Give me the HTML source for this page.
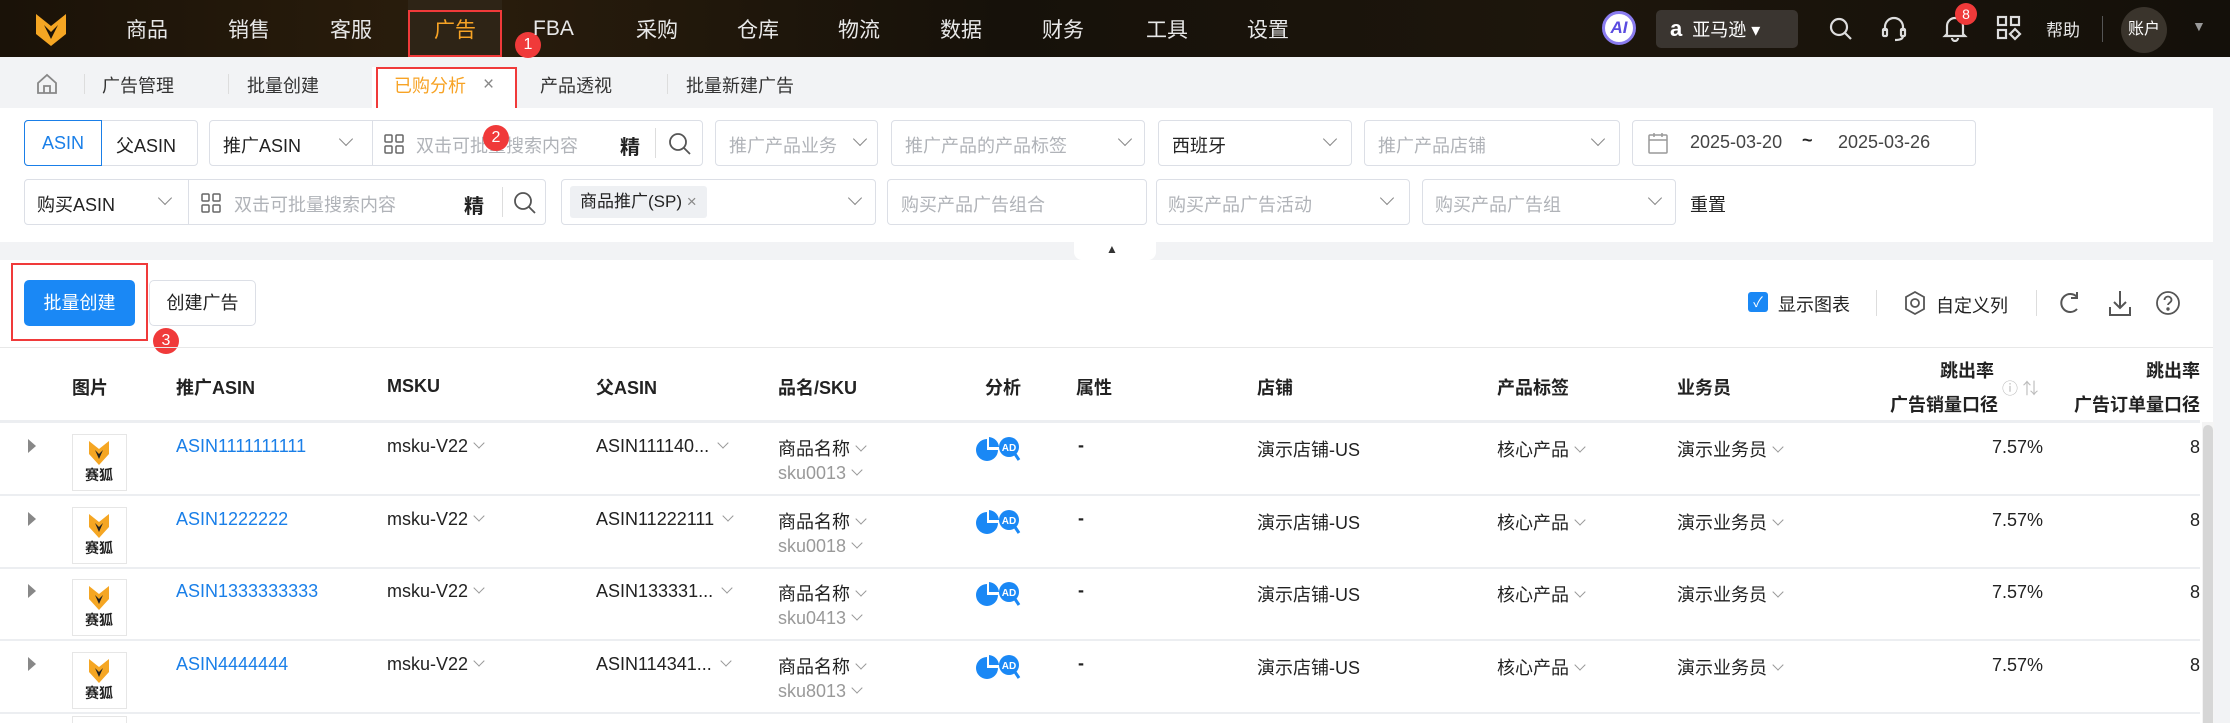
<!DOCTYPE html>
<html style="width:2230px;height:723px;overflow:hidden"><head><meta charset="utf-8"><style>
*{box-sizing:border-box;margin:0;padding:0}
body{width:2230px;height:723px;overflow:hidden;background:#f2f3f5;font-family:"Liberation Sans","Noto Sans CJK SC",sans-serif;color:#222;font-size:18px}
#wrap{position:relative;width:2230px;height:723px;overflow:hidden}
.a{position:absolute;white-space:nowrap}
.nav{left:0;top:0;width:2230px;height:57px;background:linear-gradient(90deg,#1a1208 0%,#2a1d0c 20%,#16110a 45%,#1d160c 70%,#14100a 100%)}
.box{border:1px solid #dcdfe6;border-radius:4px;background:#fff;height:46px}
.ph{color:#b0b3b8}
.chev{width:10px;height:10px;border-right:1.5px solid #888;border-bottom:1.5px solid #888;transform:rotate(45deg)}
.red{border:2px solid #f03a3a}
.rc{width:26px;height:26px;border-radius:50%;background:#f03a3a;color:#fff;font-size:16px;text-align:center;line-height:26px}
.th{font-weight:bold;font-size:18px;top:374px}
.lnk{color:#1a7fe8}
.g{color:#999}
.sm{display:inline-block;width:8px;height:8px;border-right:1.3px solid #999;border-bottom:1.3px solid #999;transform:rotate(45deg);margin-left:7px;position:relative;top:-5px}
.nm{color:#e8e8e8;font-size:21px;top:14px}
</style></head><body><div id="wrap">
<div class="a nav"></div>
<svg class="a" style="left:33px;top:12px" width="36" height="36" viewBox="0 0 36 36"><path d="M3 2 L18 14 L33 2 L33 22 L18 34 L3 22Z" fill="#f5a623"/><path d="M11 13 L18 20 L25 13 L18 27Z" fill="#1a1208"/></svg>
<div class="a nm" style="left:126px">商品</div>
<div class="a nm" style="left:228px">销售</div>
<div class="a nm" style="left:330px">客服</div>
<div class="a" style="left:408px;top:0;width:94px;height:57px;background:#2e2416"></div>
<div class="a red" style="left:408px;top:10px;width:94px;height:47px"></div>
<div class="a nm" style="left:434px;color:#f7a325">广告</div>
<div class="a rc" style="left:515px;top:32px">1</div>
<div class="a nm" style="left:533px;top:17px">FBA</div>
<div class="a nm" style="left:636px">采购</div>
<div class="a nm" style="left:737px">仓库</div>
<div class="a nm" style="left:838px">物流</div>
<div class="a nm" style="left:940px">数据</div>
<div class="a nm" style="left:1042px">财务</div>
<div class="a nm" style="left:1146px">工具</div>
<div class="a nm" style="left:1247px">设置</div>
<div class="a" style="left:1602px;top:11px;width:34px;height:34px;border-radius:50%;background:#fff;border:3px solid #8a7cf0;color:#5a4be0;font-weight:bold;font-style:italic;font-size:17px;text-align:center;line-height:28px">AI</div>
<div class="a" style="left:1656px;top:10px;width:142px;height:38px;border-radius:5px;background:#3a3530;color:#fff;font-size:18px;line-height:38px;padding-left:14px"><b style="font-size:22px">a</b>&nbsp; 亚马逊 ▾</div>
<svg class="a" style="left:1828px;top:16px" width="26" height="26" viewBox="0 0 26 26" fill="none" stroke="#ddd" stroke-width="2.2"><circle cx="11" cy="11" r="8"/><path d="M17 17l6 6"/></svg>
<svg class="a" style="left:1881px;top:15px" width="26" height="28" viewBox="0 0 26 28" fill="none" stroke="#ddd" stroke-width="2.2"><path d="M4 16V12a9 9 0 0118 0v4"/><rect x="2" y="14" width="4" height="7" rx="1"/><rect x="20" y="14" width="4" height="7" rx="1"/><path d="M22 21c0 3-4 4-8 4"/></svg>
<svg class="a" style="left:1942px;top:14px" width="26" height="28" viewBox="0 0 26 28" fill="none" stroke="#ddd" stroke-width="2.2"><path d="M5 20V12a8 8 0 0116 0v8l2 2H3z"/><path d="M10 24a3 3 0 006 0"/></svg>
<div class="a" style="left:1955px;top:3px;width:22px;height:22px;border-radius:50%;background:#f03a3a;color:#fff;font-size:14px;text-align:center;line-height:22px">8</div>
<svg class="a" style="left:1996px;top:15px" width="26" height="26" viewBox="0 0 26 26" fill="none" stroke="#ddd" stroke-width="2.2"><rect x="2" y="2" width="8" height="8"/><rect x="15" y="2" width="8" height="8"/><rect x="2" y="15" width="8" height="8"/><path d="M19 14l5 5-5 5-5-5z"/></svg>
<div class="a" style="left:2046px;top:16px;color:#e8e8e8;font-size:17px">帮助</div>
<div class="a" style="left:2102px;top:16px;width:1px;height:26px;background:#555"></div>
<div class="a" style="left:2121px;top:7px;width:46px;height:46px;border-radius:50%;background:#3a342c;color:#fff;font-size:16px;text-align:center;line-height:46px">账户</div>
<div class="a" style="left:2192px;top:18px;color:#999;font-size:14px">▼</div>

<svg class="a" style="left:35px;top:72px" width="24" height="24" viewBox="0 0 24 24" fill="none" stroke="#888" stroke-width="1.8"><path d="M3 11L12 3l9 8v10H3z"/><path d="M9 21v-7h6v7"/></svg>
<div class="a" style="left:84px;top:74px;width:1px;height:20px;background:#ddd"></div>
<div class="a" style="left:102px;top:72px;color:#333">广告管理</div>
<div class="a" style="left:228px;top:74px;width:1px;height:20px;background:#ddd"></div>
<div class="a" style="left:247px;top:72px;color:#333">批量创建</div>
<div class="a" style="left:372px;top:67px;width:144px;height:46px;background:#fff"></div>
<div class="a red" style="left:376px;top:67px;width:141px;height:44px"></div>
<div class="a" style="left:394px;top:72px;color:#f7a325">已购分析</div>
<div class="a" style="left:483px;top:74px;font-size:19px;color:#888">×</div>
<div class="a" style="left:540px;top:72px;color:#333">产品透视</div>
<div class="a" style="left:667px;top:74px;width:1px;height:20px;background:#ddd"></div>
<div class="a" style="left:686px;top:72px;color:#333">批量新建广告</div>

<div class="a" style="left:0;top:108px;width:2213px;height:134px;background:#fff"></div>
<div class="a box" style="left:24px;top:120px;width:174px"></div>
<div class="a" style="left:24px;top:120px;width:78px;height:46px;border:1.5px solid #1a7fe8;border-radius:4px 0 0 4px;color:#1a7fe8;text-align:center;line-height:44px">ASIN</div>
<div class="a" style="left:116px;top:132px">父ASIN</div>
<div class="a box" style="left:209px;top:120px;width:494px"></div>
<div class="a" style="left:223px;top:132px">推广ASIN</div><div class="a chev" style="left:341px;top:134px"></div>
<div class="a" style="left:372px;top:121px;width:1px;height:44px;background:#dcdfe6"></div>
<svg class="a" style="left:384px;top:134px" width="20" height="20" viewBox="0 0 20 20" fill="none" stroke="#666" stroke-width="1.5"><rect x="1" y="1" width="7" height="7" rx="1"/><rect x="12" y="1" width="7" height="7" rx="1"/><rect x="1" y="12" width="7" height="7" rx="1"/><rect x="12" y="12" width="7" height="7" rx="1"/></svg>
<div class="a ph" style="left:416px;top:132px">双击可批量搜索内容</div>
<div class="a rc" style="left:483px;top:125px">2</div>
<div class="a" style="left:620px;top:131px;font-weight:bold;font-size:20px">精</div>
<div class="a" style="left:655px;top:128px;width:1px;height:30px;background:#ddd"></div>
<svg class="a" style="left:668px;top:132px" width="24" height="24" viewBox="0 0 24 24" fill="none" stroke="#555" stroke-width="1.8"><circle cx="10" cy="10" r="8"/><path d="M16 16l6 6"/></svg>
<div class="a box" style="left:715px;top:120px;width:163px"></div><div class="a ph" style="left:729px;top:132px">推广产品业务</div><div class="a chev" style="left:855px;top:134px"></div>
<div class="a box" style="left:891px;top:120px;width:254px"></div><div class="a ph" style="left:905px;top:132px">推广产品的产品标签</div><div class="a chev" style="left:1120px;top:134px"></div>
<div class="a box" style="left:1158px;top:120px;width:194px"></div><div class="a" style="left:1172px;top:132px">西班牙</div><div class="a chev" style="left:1325px;top:134px"></div>
<div class="a box" style="left:1364px;top:120px;width:256px"></div><div class="a ph" style="left:1378px;top:132px">推广产品店铺</div><div class="a chev" style="left:1593px;top:134px"></div>
<div class="a box" style="left:1632px;top:120px;width:344px"></div>
<svg class="a" style="left:1648px;top:132px" width="20" height="22" viewBox="0 0 20 22" fill="none" stroke="#999" stroke-width="1.5"><rect x="1" y="3" width="18" height="18" rx="1"/><path d="M1 8h18M6 1v4M14 1v4"/></svg>
<div class="a" style="left:1690px;top:132px;color:#444">2025-03-20</div>
<div class="a" style="left:1802px;top:130px;font-weight:bold">~</div>
<div class="a" style="left:1838px;top:132px;color:#444">2025-03-26</div>

<div class="a box" style="left:24px;top:179px;width:522px"></div>
<div class="a" style="left:37px;top:191px">购买ASIN</div><div class="a chev" style="left:160px;top:193px"></div>
<div class="a" style="left:188px;top:180px;width:1px;height:44px;background:#dcdfe6"></div>
<svg class="a" style="left:201px;top:193px" width="20" height="20" viewBox="0 0 20 20" fill="none" stroke="#666" stroke-width="1.5"><rect x="1" y="1" width="7" height="7" rx="1"/><rect x="12" y="1" width="7" height="7" rx="1"/><rect x="1" y="12" width="7" height="7" rx="1"/><rect x="12" y="12" width="7" height="7" rx="1"/></svg>
<div class="a ph" style="left:234px;top:191px">双击可批量搜索内容</div>
<div class="a" style="left:464px;top:190px;font-weight:bold;font-size:20px">精</div>
<div class="a" style="left:502px;top:187px;width:1px;height:30px;background:#ddd"></div>
<svg class="a" style="left:513px;top:191px" width="24" height="24" viewBox="0 0 24 24" fill="none" stroke="#555" stroke-width="1.8"><circle cx="10" cy="10" r="8"/><path d="M16 16l6 6"/></svg>
<div class="a box" style="left:561px;top:179px;width:315px"></div>
<div class="a" style="left:570px;top:186px;height:32px;padding:0 10px;background:#eef0f3;border-radius:3px;line-height:32px;font-size:17px">商品推广(SP) <span style="color:#888">×</span></div>
<div class="a chev" style="left:850px;top:193px"></div>
<div class="a box" style="left:887px;top:179px;width:260px"></div><div class="a ph" style="left:901px;top:191px">购买产品广告组合</div>
<div class="a box" style="left:1156px;top:179px;width:254px"></div><div class="a ph" style="left:1168px;top:191px">购买产品广告活动</div><div class="a chev" style="left:1382px;top:193px"></div>
<div class="a box" style="left:1422px;top:179px;width:254px"></div><div class="a ph" style="left:1435px;top:191px">购买产品广告组</div><div class="a chev" style="left:1650px;top:193px"></div>
<div class="a" style="left:1690px;top:191px">重置</div>

<div class="a" style="left:1074px;top:240px;width:82px;height:20px;background:#fff;border-radius:0 0 8px 8px"></div>
<div class="a" style="left:1106px;top:242px;font-size:12px;color:#333">▲</div>

<div class="a" style="left:0;top:260px;width:2213px;height:463px;background:#fff"></div>
<div class="a" style="left:24px;top:280px;width:111px;height:46px;background:#1a88f5;border-radius:5px;color:#fff;text-align:center;line-height:46px">批量创建</div>
<div class="a red" style="left:11px;top:263px;width:137px;height:78px"></div>
<div class="a" style="left:149px;top:280px;width:107px;height:46px;border:1px solid #dcdfe6;border-radius:5px;text-align:center;line-height:44px">创建广告</div>
<div class="a rc" style="left:153px;top:328px">3</div>
<div class="a" style="left:1748px;top:292px;width:20px;height:20px;background:#1a88f5;border-radius:3px;color:#fff;font-size:14px;text-align:center;line-height:20px">✓</div>
<div class="a" style="left:1778px;top:291px">显示图表</div>
<div class="a" style="left:1876px;top:290px;width:1px;height:26px;background:#ddd"></div>
<svg class="a" style="left:1903px;top:290px" width="24" height="26" viewBox="0 0 24 26" fill="none" stroke="#555" stroke-width="1.8"><path d="M12 2l9 5v12l-9 5-9-5V7z"/><circle cx="12" cy="13" r="4"/></svg>
<div class="a" style="left:1936px;top:292px">自定义列</div>
<div class="a" style="left:2036px;top:290px;width:1px;height:26px;background:#ddd"></div>
<svg class="a" style="left:2058px;top:290px" width="24" height="26" viewBox="0 0 24 26" fill="none" stroke="#555" stroke-width="2"><path d="M19 7A9 9 0 1019 19"/><path d="M19 2v6h-6" /></svg>
<svg class="a" style="left:2107px;top:289px" width="26" height="28" viewBox="0 0 26 28" fill="none" stroke="#555" stroke-width="2"><path d="M13 2v17M7 13l6 6 6-6M3 18v8h20v-8"/></svg>
<svg class="a" style="left:2155px;top:290px" width="26" height="26" viewBox="0 0 26 26" fill="none" stroke="#555" stroke-width="1.8"><circle cx="13" cy="13" r="11"/><path d="M9.5 10a3.5 3.5 0 117 0c0 2.5-3.5 3-3.5 5"/><circle cx="13" cy="19" r=".8" fill="#555"/></svg>

<div class="a" style="left:0;top:347px;width:2213px;height:1px;background:#e8e8e8"></div>
<div class="a th" style="left:72px">图片</div>
<div class="a th" style="left:176px">推广ASIN</div>
<div class="a th" style="left:387px;top:376px">MSKU</div>
<div class="a th" style="left:596px">父ASIN</div>
<div class="a th" style="left:778px">品名/SKU</div>
<div class="a th" style="left:985px">分析</div>
<div class="a th" style="left:1076px">属性</div>
<div class="a th" style="left:1257px">店铺</div>
<div class="a th" style="left:1497px">产品标签</div>
<div class="a th" style="left:1677px">业务员</div>
<div class="a" style="left:1890px;top:354px;width:104px;text-align:right;font-weight:bold;line-height:34px">跳出率<br>广告销量口径</div>
<div class="a" style="left:2002px;top:375px;color:#bbb;font-size:16px">ⓘ ⇅</div>
<div class="a" style="left:2040px;top:354px;width:160px;text-align:right;font-weight:bold;line-height:34px">跳出率<br>广告订单量口径</div>
<div class="a" style="left:0;top:420px;width:2200px;height:3px;background:#eceef1"></div>
<div class="a" style="left:2202px;top:422px;width:12px;height:301px;background:#f4f4f4"></div>
<div class="a" style="left:2203px;top:425px;width:10px;height:298px;background:#d6d6d6;border-radius:5px 5px 0 0"></div>
<div class="a" style="left:72px;top:716px;width:55px;height:7px;border:1px solid #e6e6e6;border-bottom:none;background:#fff"></div>

<div id="rows"></div>
</div>
<script>
const d=[["ASIN1111111111","ASIN111140...","sku0013"],["ASIN1222222","ASIN11222111","sku0018"],["ASIN1333333333","ASIN133331...","sku0413"],["ASIN4444444","ASIN114341...","sku8013"]];
let h="";
for(let i=0;i<4;i++){const t=423+i*72.5;const r=d[i];
 h+=`<div class="a" style="left:0;top:${t+71}px;width:2200px;height:2px;background:#eceef1"></div>
 <div class="a" style="left:72px;top:${t+11}px;width:55px;height:57px;border:1px solid #e6e6e6;background:#fff"></div>
 <svg class="a" style="left:87px;top:${t+17}px" width="24" height="26" viewBox="0 0 24 26"><path d="M2 1L12 9L22 1V14L12 25L2 14Z" fill="#f5a623"/><path d="M8 10L12 14L16 10L12 19Z" fill="#222"/></svg>
 <div class="a" style="left:85px;top:${t+42}px;font-size:14px;font-weight:bold">赛狐</div>
 <div class="a" style="left:28px;top:${t+16}px;width:0;height:0;border-left:8px solid #888;border-top:7px solid transparent;border-bottom:7px solid transparent"></div>
 <div class="a lnk" style="left:176px;top:${t+13}px">${r[0]}</div>
 <div class="a" style="left:387px;top:${t+13}px">msku-V22<span class="sm"></span></div>
 <div class="a" style="left:596px;top:${t+13}px">${r[1]}<span class="sm" style="margin-left:10px"></span></div>
 <div class="a" style="left:778px;top:${t+12}px">商品名称<span class="sm"></span></div>
 <div class="a g" style="left:778px;top:${t+40}px">${r[2]}<span class="sm"></span></div>
 <svg class="a" style="left:976px;top:${t+13}px" width="46" height="28" viewBox="0 0 46 28"><path d="M11 3a11 11 0 1011 11H11z" fill="#1a88f5"/><path d="M13 1a11 11 0 0110 10H13z" fill="#1a88f5"/><circle cx="33" cy="11" r="10" fill="#1a88f5"/><path d="M39 18l4 6" stroke="#1a88f5" stroke-width="3"/><text x="33" y="15" font-size="10" font-weight="bold" fill="#fff" text-anchor="middle" font-family="Liberation Sans">AD</text></svg>
 <div class="a" style="left:1078px;top:${t+12}px;font-weight:bold">-</div>
 <div class="a" style="left:1257px;top:${t+13}px">演示店铺-US</div>
 <div class="a" style="left:1497px;top:${t+13}px">核心产品<span class="sm"></span></div>
 <div class="a" style="left:1677px;top:${t+13}px">演示业务员<span class="sm"></span></div>
 <div class="a" style="left:1900px;top:${t+14}px;width:143px;text-align:right">7.57%</div>
 <div class="a" style="left:2190px;top:${t+14}px">8</div>`;}
document.getElementById("rows").outerHTML=h;
</script>
</body></html>
